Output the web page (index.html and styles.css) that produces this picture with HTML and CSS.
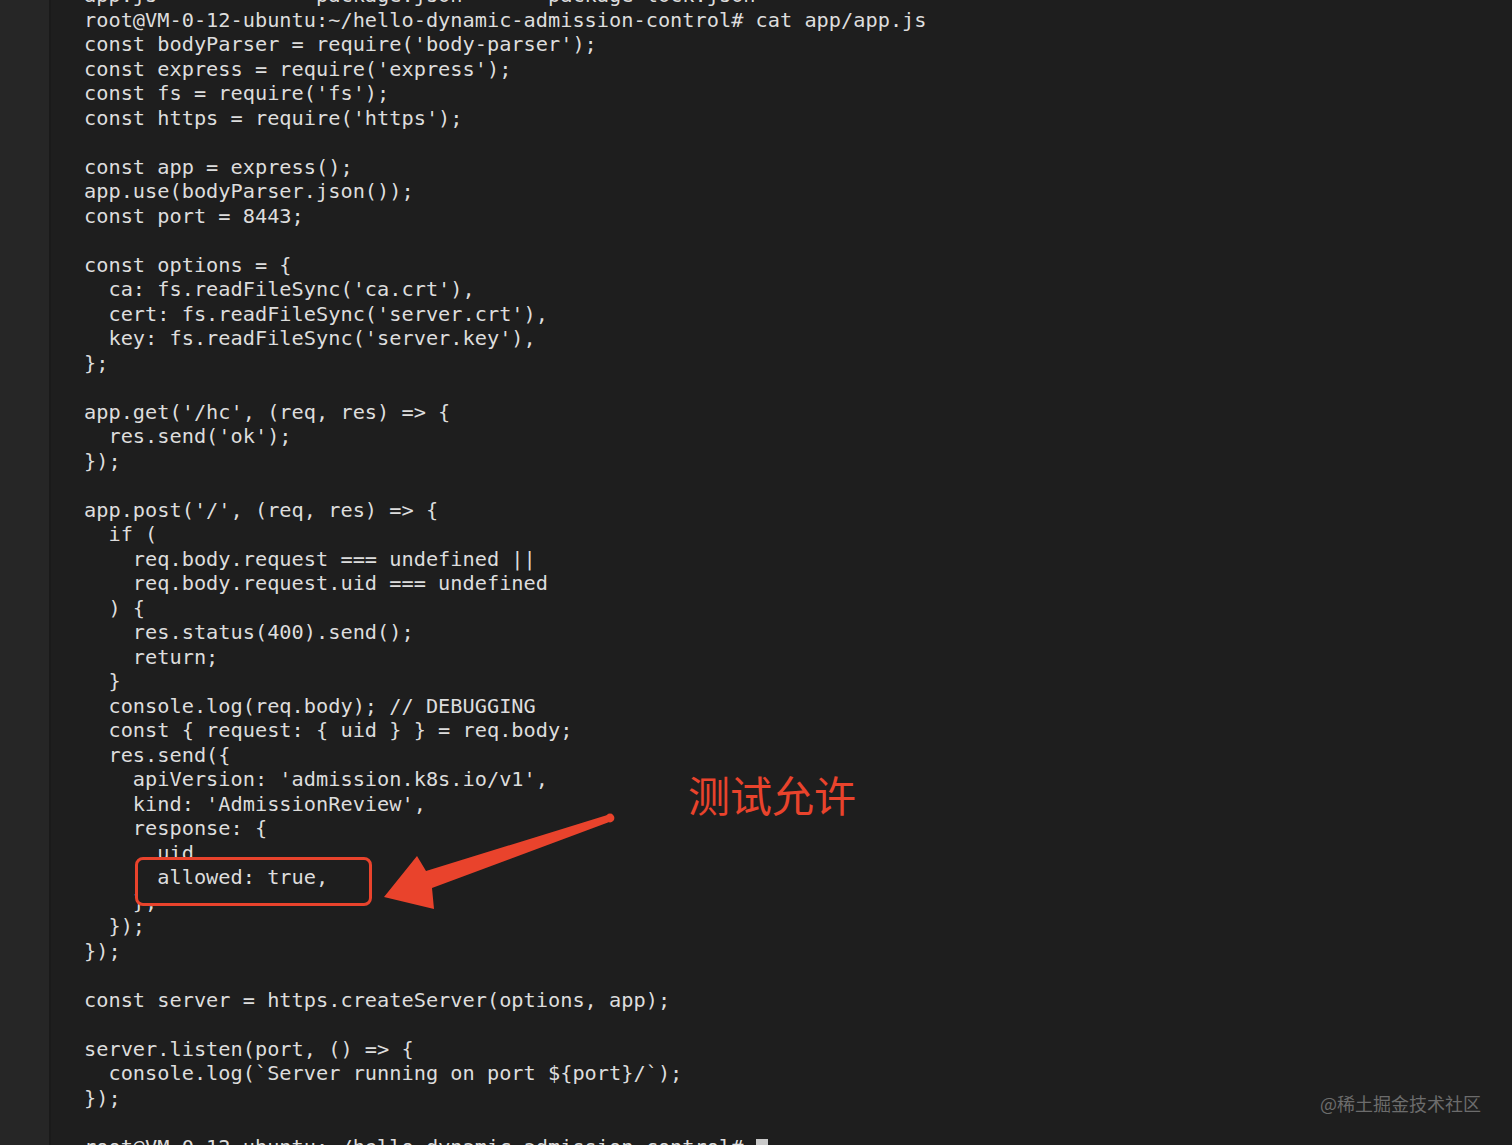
FILE: index.html
```html
<!DOCTYPE html>
<html lang="zh-CN">
<head>
<meta charset="utf-8">
<title>app.js</title>
<link rel="stylesheet" href="styles.css">
</head>
<body>
<div class="screen">
  <div class="gutter"></div>
  <div class="term">
<pre class="code">app.js             package.json       package-lock.json
root@VM-0-12-ubuntu:~/hello-dynamic-admission-control# cat app/app.js
const bodyParser = require('body-parser');
const express = require('express');
const fs = require('fs');
const https = require('https');

const app = express();
app.use(bodyParser.json());
const port = 8443;

const options = {
  ca: fs.readFileSync('ca.crt'),
  cert: fs.readFileSync('server.crt'),
  key: fs.readFileSync('server.key'),
};

app.get('/hc', (req, res) => {
  res.send('ok');
});

app.post('/', (req, res) => {
  if (
    req.body.request === undefined ||
    req.body.request.uid === undefined
  ) {
    res.status(400).send();
    return;
  }
  console.log(req.body); // DEBUGGING
  const { request: { uid } } = req.body;
  res.send({
    apiVersion: 'admission.k8s.io/v1',
    kind: 'AdmissionReview',
    response: {
      uid,
<span class="hl">      allowed: true,</span>
    },
  });
});

const server = https.createServer(options, app);

server.listen(port, () => {
  console.log(`Server running on port ${port}/`);
});

root@VM-0-12-ubuntu:~/hello-dynamic-admission-control# <span class="cursor"> </span></pre>
  </div>

  <div class="mark-box"></div>
  <svg class="mark-arrow" viewBox="370 800 260 120" width="260" height="120">
    <circle cx="610" cy="818" r="4.4" fill="#e9432c"/>
    <polygon fill="#e9432c" points="611.4,813.8 426,871 417,856 384,897 434,909 432,888 608.6,822.2"/>
  </svg>
  <div class="mark-label">测试允许</div>
  <div class="watermark">@稀土掘金技术社区</div>
</div>
</body>
</html>
```
FILE: styles.css
```css
html, body {
  margin: 0;
  padding: 0;
  background: #1e1e1e;
}

.screen {
  position: relative;
  display: flex;
  width: 1512px;
  height: 1145px;
  overflow: hidden;
  background: #1e1e1e;
}

.gutter {
  width: 49px;
  flex: none;
  background: #262626;
  border-right: 2px solid #1a1a1a;
}

.term {
  flex: 1;
  padding-left: 33px;
}

.code {
  margin: -17px 0 0 0;
  font-family: "DejaVu Sans Mono", "Liberation Mono", monospace;
  font-size: 20.3px;
  line-height: 24.5px;
  color: #dddddd;
  white-space: pre;
}

.hl {
  position: relative;
  z-index: 3;
}

.cursor {
  display: inline-block;
  width: 12px;
  height: 20px;
  background: #c9c9c9;
  vertical-align: -4px;
}

.mark-box {
  position: absolute;
  left: 135px;
  top: 857px;
  width: 231px;
  height: 43px;
  border: 3px solid #e9432c;
  border-radius: 8px;
  background: #1e1e1e;
  z-index: 2;
}

.mark-arrow {
  position: absolute;
  left: 370px;
  top: 800px;
  z-index: 2;
}

.mark-label {
  position: absolute;
  left: 688px;
  top: 769px;
  font-family: "Noto Sans CJK SC", sans-serif;
  font-size: 42px;
  line-height: 50px;
  color: #e9432c;
}

.watermark {
  position: absolute;
  left: 1320px;
  top: 1091px;
  font-family: "Noto Sans CJK SC", sans-serif;
  font-size: 18px;
  line-height: 24px;
  color: #6c6c6c;
}
```
